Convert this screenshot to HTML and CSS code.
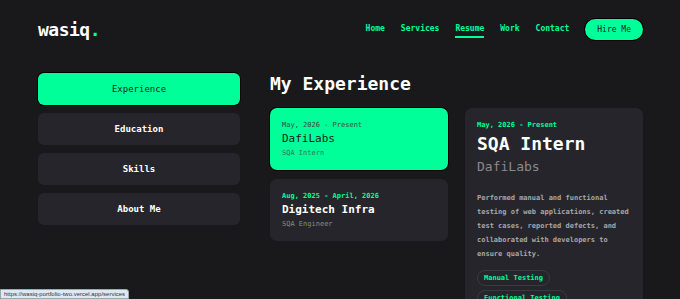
FILE: index.html
```html
<!DOCTYPE html>
<html lang="en">
<head>
  <meta charset="UTF-8">
  <meta name="viewport" content="width=device-width, initial-scale=1.0">
  <title>wasiq. | Resume</title>
  <link rel="stylesheet" href="styles.css">
</head>
<body>

  <header class="site-header">
    <div class="logo">wasiq<span class="dot">.</span></div>
    <nav class="nav">
      <a href="#">Home</a>
      <a href="#">Services</a>
      <a href="#" class="active">Resume</a>
      <a href="#">Work</a>
      <a href="#">Contact</a>
      <a href="#" class="hire-btn">Hire Me</a>
    </nav>
  </header>

  <div class="resume">
    <!-- Tabs -->
    <div class="tabs">
      <button class="tab active">Experience</button>
      <button class="tab">Education</button>
      <button class="tab">Skills</button>
      <button class="tab">About Me</button>
    </div>

    <!-- Experience -->
    <div class="content">
      <h2 class="title">My Experience</h2>
      <div class="exp-grid">
        <div class="exp-list">
          <div class="exp-card selected">
            <p class="exp-date">May, 2026 - Present</p>
            <h3 class="exp-company">DafiLabs</h3>
            <p class="exp-role">SQA Intern</p>
          </div>
          <div class="exp-card">
            <p class="exp-date">Aug, 2025 - April, 2026</p>
            <h3 class="exp-company">Digitech Infra</h3>
            <p class="exp-role">SQA Engineer</p>
          </div>
        </div>

        <div class="exp-detail">
          <p class="exp-date">May, 2026 - Present</p>
          <h3 class="detail-role">SQA Intern</h3>
          <p class="detail-company">DafiLabs</p>
          <p class="detail-text">Performed manual and functional testing of web applications, created test cases, reported defects, and collaborated with developers to ensure quality.</p>
          <div class="tags">
            <span class="tag">Manual Testing</span>
            <span class="tag">Functional Testing</span>
          </div>
        </div>
      </div>
    </div>
  </div>

  <div class="status-url">https://wasiq-portfolio-two.vercel.app/services</div>

</body>
</html>
```

FILE: styles.css
```css
html {
  overflow: hidden;
}
body {
  font-family: "DejaVu Sans Mono", "Liberation Mono", monospace;
  background-color: #19191b;
  margin: 0;
  color: #fff;
  height: 299px;
  overflow: hidden;
}
.site-header {
  display: flex;
  align-items: center;
  justify-content: space-between;
  padding: 17px 37px 0 38px;
  height: 25px;
}
.logo {
  font-size: 18px;
  font-weight: bold;
  letter-spacing: -0.5px;
}
.logo .dot {
  color: #00ff99;
}
.nav {
  display: flex;
  align-items: center;
  gap: 16px;
}
.nav a {
  color: #00ff99;
  text-decoration: none;
  font-size: 8px;
  font-weight: bold;
  padding: 3px 0;
  border-bottom: 2px solid transparent;
}
.nav a.active {
  border-bottom-color: #00ff99;
}
.hire-btn {
  background-color: #00ff99;
  color: #1a1a1a !important;
  font-weight: normal !important;
  padding: 6px 12px !important;
  border-radius: 12px;
  border: none !important;
  box-shadow: 0 0 0 1px #000;
}
.resume {
  display: flex;
  gap: 30px;
  margin: 31px 37px 0 38px;
}
.tabs {
  width: 202px;
  display: flex;
  flex-direction: column;
  gap: 8px;
}
.tab {
  height: 32px;
  border: none;
  border-radius: 6px;
  background-color: #26252b;
  color: #fff;
  font-family: inherit;
  font-size: 9px;
  font-weight: bold;
}
.tab.active {
  background-color: #00ff99;
  color: #1a1a1a;
  font-weight: normal;
  box-shadow: 0 0 0 1px #000;
}
.content {
  flex: 1;
}
.title {
  font-size: 18px;
  margin: 0 0 13px;
  line-height: 22px;
}
.exp-grid {
  display: flex;
  gap: 17px;
}
.exp-list {
  width: 178px;
  display: flex;
  flex-direction: column;
  gap: 9px;
}
.exp-card {
  background-color: #26252b;
  border-radius: 7px;
  padding: 12px 12px 12px;
  height: 38px;
}
.exp-card.selected {
  background-color: #00ff99;
  color: #1a1a1a;
  box-shadow: 0 0 0 1px #000;
}
.exp-date {
  margin: 0;
  font-size: 7px;
  font-weight: bold;
  color: #00ff99;
  line-height: 10px;
}
.exp-card.selected .exp-date {
  color: #444;
  font-weight: normal;
}
.exp-company {
  margin: 2px 0 1px;
  font-size: 11px;
  line-height: 14px;
}
.exp-card.selected .exp-company {
  font-weight: normal;
}
.exp-role {
  margin: 0;
  font-size: 7px;
  color: #8a8a8a;
  line-height: 12px;
}
.exp-card.selected .exp-role {
  color: #3d6b55;
}
.exp-detail {
  width: 154px;
  background-color: #26252b;
  border-radius: 7px;
  padding: 12px 12px;
  height: 200px;
}
.detail-role {
  margin: 3px 0 0;
  font-size: 18px;
  line-height: 22px;
}
.detail-company {
  margin: 2px 0 0;
  font-size: 13px;
  color: #8a8a8a;
  line-height: 20px;
}
.detail-text {
  margin: 14px 0 9px;
  font-size: 7px;
  font-weight: bold;
  line-height: 14px;
  color: #a8a8a8;
}
.tags {
  display: flex;
  flex-wrap: wrap;
  gap: 4px;
}
.tag {
  font-size: 7px;
  font-weight: bold;
  color: #00ff99;
  border: 1px solid #3a3a40;
  border-radius: 8px;
  padding: 2px 6px;
  line-height: 10px;
}
.status-url {
  position: fixed;
  left: 0;
  bottom: 0;
  font-family: "Liberation Sans", Arial, sans-serif;
  font-size: 6px;
  color: #333;
  background-color: #dde8f3;
  border: 1px solid #9aa;
  border-radius: 0 3px 0 0;
  padding: 1px 3px;
}
```
